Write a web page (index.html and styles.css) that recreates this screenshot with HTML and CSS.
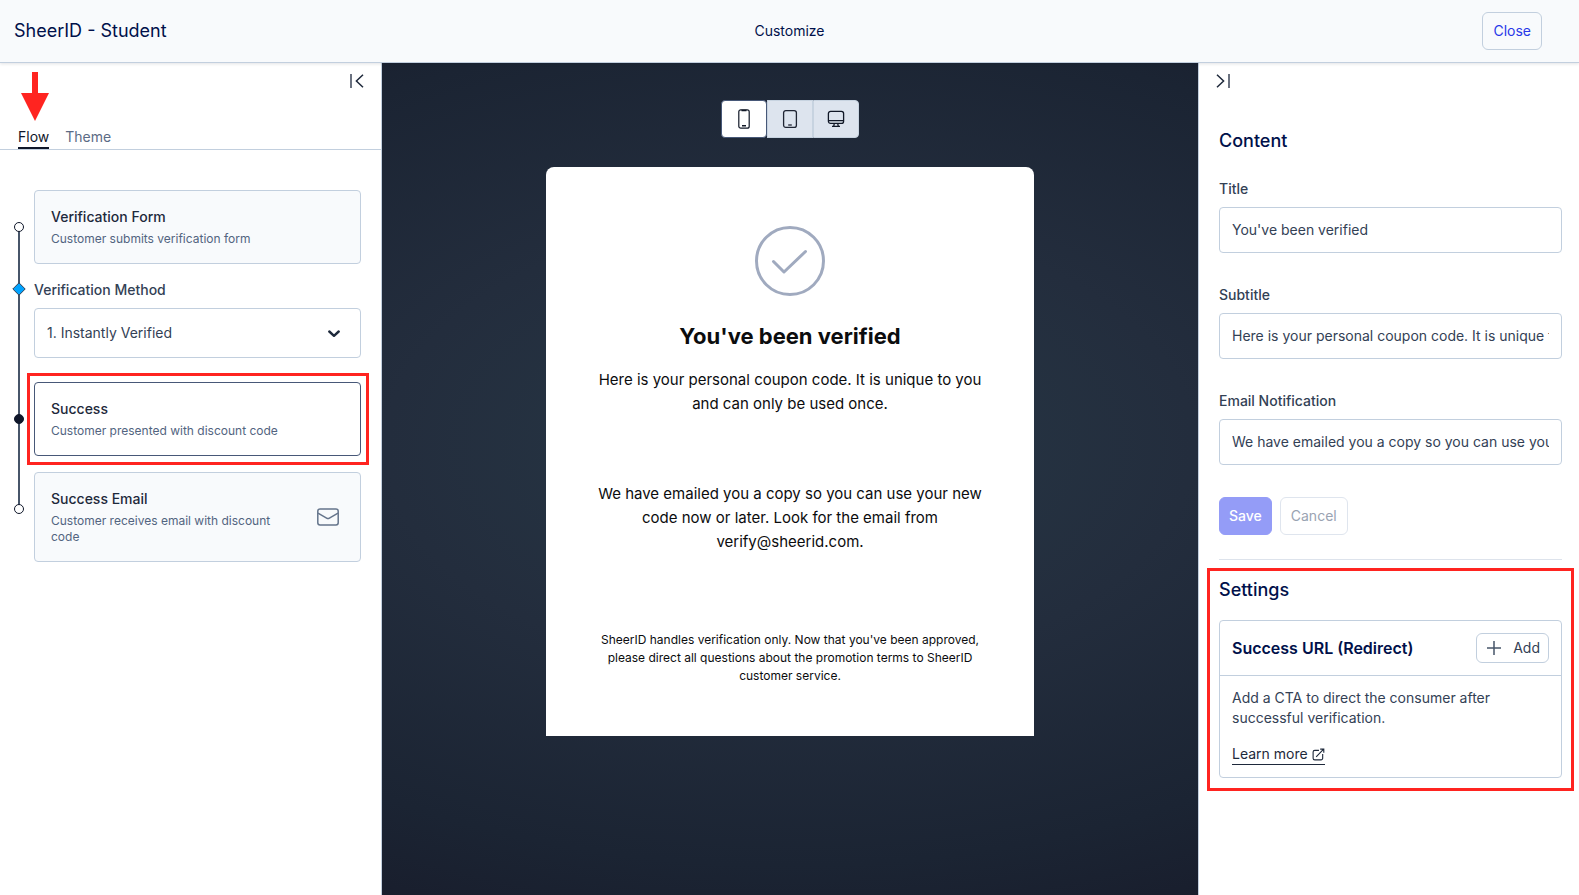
FILE: index.html
```html
<!DOCTYPE html>
<html lang="en">
<head>
    <meta charset="UTF-8">
    <meta name="viewport" content="width=device-width, initial-scale=1.0">
    <title>SheerID - Student</title>
    <link rel="stylesheet" href="styles.css">
</head>
<body>
    <header class="topbar">
        <h1 class="program-name">SheerID - Student</h1>
        <span class="page-name">Customize</span>
        <button class="btn btn-close" type="button">Close</button>
    </header>

    <div class="layout">
        <aside class="panel panel-left">
            <div class="panel-toggle">
                <button class="icon-btn" type="button" aria-label="Collapse left panel">
                    <svg width="14" height="14" viewBox="0 0 14 14"><path d="M1 0v14" stroke="#6b7280" stroke-width="2"/><path d="M13 0.7L6.4 7l6.600 6.300" fill="none" stroke="#1e293b" stroke-width="1.5"/></svg>
                </button>
                <svg class="arrow" width="28" height="49" viewBox="0 0 28 49"><path d="M11 0h6v21h11L14 49 0 21h11z" fill="#ff2420"/></svg>
            </div>

            <nav class="tabs">
                <button class="tab active" type="button">Flow</button>
                <button class="tab" type="button">Theme</button>
            </nav>

            <ol class="flow">
                <li class="step">
                    <span class="dot"></span>
                    <button class="card" type="button">
                        <span class="card-text">
                            <span class="card-title">Verification Form</span>
                            <span class="card-sub">Customer submits verification form</span>
                        </span>
                    </button>
                </li>
                <li class="step step-method">
                    <svg class="diamond" width="14" height="14" viewBox="0 0 14 14"><path d="M7 .8L13.200 7 7 13.200.8 7z" fill="#00a3ff" stroke="#334155"/></svg>
                    <label class="method-label" for="method">Verification Method</label>
                    <div class="select-wrap">
                        <select id="method">
                            <option>1. Instantly Verified</option>
                        </select>
                        <svg class="chevron" width="12" height="8" viewBox="0 0 12 8"><path d="M1.300 1.500L6 5.800l4.700-4.300" fill="none" stroke="#1e293b" stroke-width="2.400" stroke-linecap="round" stroke-linejoin="round"/></svg>
                    </div>
                </li>
                <li class="step highlight">
                    <span class="dot filled"></span>
                    <button class="card selected" type="button">
                        <span class="card-text">
                            <span class="card-title">Success</span>
                            <span class="card-sub">Customer presented with discount code</span>
                        </span>
                    </button>
                </li>
                <li class="step">
                    <span class="dot"></span>
                    <button class="card" type="button">
                        <span class="card-text">
                            <span class="card-title">Success Email</span>
                            <span class="card-sub">Customer receives email with discount code</span>
                        </span>
                        <svg class="mail" width="22" height="18" viewBox="0 0 22 18" fill="none" stroke="#64748b" stroke-width="1.500"><rect x=".8" y="1" width="20.400" height="16" rx="2.200"/><path d="M1 5.200l8.600 5a2.800 2.800 0 0 0 2.800 0l8.600-5"/></svg>
                    </button>
                </li>
            </ol>
        </aside>

        <main class="preview">
            <div class="devices">
                <button class="device active" type="button" aria-label="Phone">
                    <svg width="20" height="20" viewBox="0 0 20 20" fill="none" stroke="#111827" stroke-width="1.200"><rect x="4.800" y=".8" width="10.400" height="18.400" rx="2"/><path d="M7.500 1.600h5M8 16.700h4" stroke-width="1.500"/></svg>
                </button>
                <button class="device" type="button" aria-label="Tablet">
                    <svg width="20" height="20" viewBox="0 0 20 20" fill="none" stroke="#1f2433" stroke-width="1.300"><rect x="3.600" y="1.600" width="12.800" height="16.800" rx="2.200"/><path d="M8.200 16h3.600"/></svg>
                </button>
                <button class="device" type="button" aria-label="Desktop">
                    <svg width="20" height="20" viewBox="0 0 20 20" fill="none" stroke="#111827" stroke-width="1.300"><rect x="2.400" y="2.400" width="15.200" height="12" rx="2.200"/><path d="M2.400 11.600h15.200M8.300 14.400l-.6 2.900M11.700 14.400l.6 2.900M6 17.400h8"/></svg>
                </button>
            </div>

            <section class="result">
                <svg class="check" width="70" height="70" viewBox="0 0 70 70" fill="none" stroke="#a0aabf" stroke-width="3" stroke-linecap="round" stroke-linejoin="round"><circle cx="35" cy="35" r="33.500"/><path d="M18.500 35.500L29 46l21.500-20.500"/></svg>
                <h2>You've been verified</h2>
                <p class="message">Here is your personal coupon code. It is unique to you and can only be used once.</p>
                <p class="message email-note">We have emailed you a copy so you can use your new code now or later. Look for the email from verify@sheerid.com.</p>
                <p class="fine-print">SheerID handles verification only. Now that you've been approved, please direct all questions about the promotion terms to SheerID customer service.</p>
            </section>
        </main>

        <aside class="panel panel-right">
            <div class="panel-toggle">
                <button class="icon-btn" type="button" aria-label="Collapse right panel">
                    <svg width="14" height="14" viewBox="0 0 14 14"><path d="M13 0v14" stroke="#6b7280" stroke-width="2"/><path d="M1 .7L7.600 7 1 13.300" fill="none" stroke="#1e293b" stroke-width="1.5"/></svg>
                </button>
            </div>

            <form class="content-form">
                <h2 class="section-title">Content</h2>
                <div class="field">
                    <label for="title">Title</label>
                    <input id="title" type="text" value="You've been verified">
                </div>
                <div class="field">
                    <label for="subtitle">Subtitle</label>
                    <input id="subtitle" type="text" value="Here is your personal coupon code. It is unique to you and can only be used once.">
                </div>
                <div class="field">
                    <label for="email-notification">Email Notification</label>
                    <input id="email-notification" type="text" value="We have emailed you a copy so you can use your new code now or later.">
                </div>
                <div class="actions">
                    <button class="btn btn-save" type="button" disabled>Save</button>
                    <button class="btn btn-cancel" type="button" disabled>Cancel</button>
                </div>
            </form>

            <section class="settings">
                <h2 class="section-title">Settings</h2>
                <div class="setting-card">
                    <div class="setting-head">
                        <h3>Success URL (Redirect)</h3>
                        <button class="btn btn-add" type="button">
                            <svg width="14" height="14" viewBox="0 0 14 14" stroke="#475569" stroke-width="1.500"><path d="M7 0v14M0 7h14"/></svg>
                            Add
                        </button>
                    </div>
                    <div class="setting-body">
                        <p>Add a CTA to direct the consumer after successful verification.</p>
                        <a class="learn-more" href="#">Learn more
                            <svg width="13" height="13" viewBox="0 0 14 14" fill="none" stroke="#1e293b" stroke-width="1.200"><path d="M7.500 2.500H3a1.800 1.800 0 0 0-1.800 1.800V11A1.800 1.800 0 0 0 3 12.800h6.700a1.800 1.800 0 0 0 1.800-1.800V6.500M4.500 9.500L12.500 1.300M8.800 1.200h3.900v3.900"/></svg>
                        </a>
                    </div>
                </div>
            </section>
        </aside>
    </div>
</body>
</html>
```

FILE: styles.css
```css
* {
    box-sizing: border-box;
}

body {
    font-family: Inter, "Liberation Sans", sans-serif;
    font-size: 14px;
    line-height: 20px;
    margin: 0;
    min-height: 100vh;
    display: flex;
    flex-direction: column;
    color: #334155;
    background: #fff;
}

h1, h2, h3, p, ol {
    margin: 0;
    padding: 0;
}

button, input, select {
    font: inherit;
    color: inherit;
}

button {
    cursor: pointer;
}

svg {
    display: block;
    flex: none;
}

/* Top bar */
.topbar {
    display: grid;
    grid-template-columns: 1fr auto 1fr;
    align-items: center;
    padding: 12px 37px 12px 14px;
    background: #f8fafc;
    border-bottom: 1px solid #c2cfde;
    box-shadow: 0 1px 3px rgba(15, 23, 42, 0.12);
    position: relative;
}

.program-name {
    font-size: 18px;
    font-weight: 400;
    color: #00104a;
}

.page-name {
    color: #00104a;
    margin-left: 23px;
}

.btn {
    height: 38px;
    padding: 0 10px;
    border: 1px solid #c2cfde;
    border-radius: 6px;
    background: #fff;
}

.btn-close {
    justify-self: end;
    color: #2838e8;
    background: #f8fafc;
}

/* Columns */
.layout {
    flex: 1;
    display: grid;
    grid-template-columns: 382px 1fr 381px;
}

.panel-left {
    border-right: 1px solid #c2cfde;
}

.panel-right {
    border-left: 1px solid #c2cfde;
    padding: 0 17px 0 20px;
}

.panel-toggle {
    display: flex;
    height: 56px;
    padding-top: 11px;
    align-items: flex-start;
    position: relative;
}

.panel-left .panel-toggle {
    justify-content: flex-end;
    padding-right: 17px;
}

.panel-right .panel-toggle {
    margin-left: -3px;
}

.icon-btn {
    padding: 0;
    border: 0;
    background: none;
}

.arrow {
    position: absolute;
    left: 21px;
    top: 9px;
}

/* Left panel */
.tabs {
    display: flex;
    gap: 16px;
    padding: 8px 18px 0;
    border-bottom: 1px solid #c2cfde;
}

.tab {
    padding: 0;
    border: 0;
    border-bottom: 2px solid transparent;
    background: none;
    color: #5b6b85;
}

.tab.active {
    color: #0f172a;
    border-bottom-color: #0f172a;
}

.flow {
    list-style: none;
    display: flex;
    flex-direction: column;
    gap: 16px;
    padding: 40px 20px 0 34px;
}

.step {
    position: relative;
}

/* connecting line between steps */
.step:not(:last-child)::before {
    content: "";
    position: absolute;
    left: -16px;
    top: 37px;
    bottom: -53px;
    width: 2px;
    background: #475569;
}

.step-method::before {
    display: none;
}

.step:first-child::before {
    bottom: -192px;
}

.dot {
    position: absolute;
    left: -20px;
    top: 32px;
    width: 10px;
    height: 10px;
    border: 1px solid #0f172a;
    border-radius: 50%;
    background: #fff;
}

.dot.filled {
    background: #0f172a;
}

.card {
    display: flex;
    width: 100%;
    align-items: center;
    justify-content: space-between;
    padding: 16px 21px 16px 16px;
    border: 1px solid #c2cfde;
    border-radius: 4px;
    background: #f8fafc;
    text-align: left;
}

.card.selected {
    background: #fff;
    border-color: #475878;
}

.card-text {
    display: flex;
    flex-direction: column;
    gap: 4px;
    max-width: 240px;
}

.card .card-text:only-child {
    max-width: none;
}

.card-title {
    font-weight: 500;
    color: #1e293b;
}

.card-sub {
    font-size: 12px;
    line-height: 16px;
    color: #526480;
}

.step-method {
    display: flex;
    flex-direction: column;
    gap: 8px;
    margin-bottom: 8px;
}

.diamond {
    position: absolute;
    left: -22px;
    top: 2px;
}

.method-label {
    font-weight: 500;
}

.select-wrap {
    position: relative;
}

select {
    appearance: none;
    width: 100%;
    height: 50px;
    padding: 0 48px 0 12px;
    border: 1px solid #c2cfde;
    border-radius: 4px;
    background: #fff;
}

.chevron {
    position: absolute;
    right: 21px;
    top: 22px;
    pointer-events: none;
}

/* red callout boxes */
.highlight::after,
.settings::after {
    content: "";
    position: absolute;
    inset: -9px -8px -9px -7px;
    border: 3px solid #ff2420;
    pointer-events: none;
}

/* Preview */
.preview {
    display: flex;
    flex-direction: column;
    align-items: center;
    gap: 29px;
    padding: 37px 0 40px;
    background: radial-gradient(ellipse 130% 72% at 50% 46%, #273846 0%, #232d3d 38%, #1b2433 70%, #181c2b 90%);
}

.devices {
    display: flex;
}

.device {
    display: flex;
    align-items: center;
    justify-content: center;
    width: 46px;
    height: 38px;
    padding: 0;
    border: 1px solid #c7d3e0;
    background: #dde4ee;
}

.device:first-child {
    border-radius: 4px 0 0 4px;
}

.device:last-child {
    border-radius: 0 4px 4px 0;
}

.device.active {
    background: #fff;
    border-color: #475878;
    border-radius: 4px;
}

.result {
    display: flex;
    flex-direction: column;
    align-items: center;
    width: 488px;
    padding: 59px 40px 51px;
    border-radius: 8px 8px 0 0;
    background: #fff;
    color: #0b0c0e;
    text-align: center;
}

.result h2 {
    margin-top: 24px;
    font-size: 22px;
    line-height: 32px;
    font-weight: 700;
}

.message {
    margin-top: 16px;
    font-size: 15px;
    line-height: 24px;
}

.email-note {
    margin-top: 66px;
}

.fine-print {
    margin-top: 77px;
    font-size: 12px;
    line-height: 18px;
}

/* Right panel */
.section-title {
    font-size: 18px;
    line-height: 24px;
    font-weight: 500;
    color: #00104a;
}

.content-form {
    padding: 10px 0 24px;
    border-bottom: 1px solid #dde3ec;
}

.content-form .section-title {
    margin-bottom: 26px;
}

.field {
    display: flex;
    flex-direction: column;
    gap: 8px;
    margin-bottom: 32px;
}

.field label {
    font-weight: 500;
}

.field input {
    height: 46px;
    padding: 0 12px 2px;
    border: 1px solid #c2cfde;
    border-radius: 4px;
    background: #fff;
}

.actions {
    display: flex;
    gap: 8px;
}

.btn-save {
    padding: 0 9px;
    border-color: #949cf7;
    background: #949cf7;
    color: #fff;
    font-weight: 500;
}

.btn-cancel {
    border-color: #dfe5ee;
    color: #9aa3b2;
}

.settings {
    position: relative;
    padding-top: 18px;
}

.settings::after {
    inset: 8px -12px -13px;
}

.setting-card {
    margin-top: 18px;
    border: 1px solid #c2cfde;
    border-radius: 4px;
}

.setting-head {
    display: flex;
    align-items: center;
    justify-content: space-between;
    padding: 12px;
    border-bottom: 1px solid #c2cfde;
}

.setting-head h3 {
    font-size: 16px;
    line-height: 24px;
    font-weight: 600;
    color: #00104a;
}

.btn-add {
    display: flex;
    align-items: center;
    gap: 12px;
    height: 30px;
    padding: 0 8px 0 10px;
}

.setting-body {
    padding: 12px;
}

.learn-more {
    display: inline-flex;
    align-items: center;
    gap: 4px;
    margin-top: 16px;
    border-bottom: 1px solid #1e293b;
    color: #1e293b;
    text-decoration: none;
}
```
